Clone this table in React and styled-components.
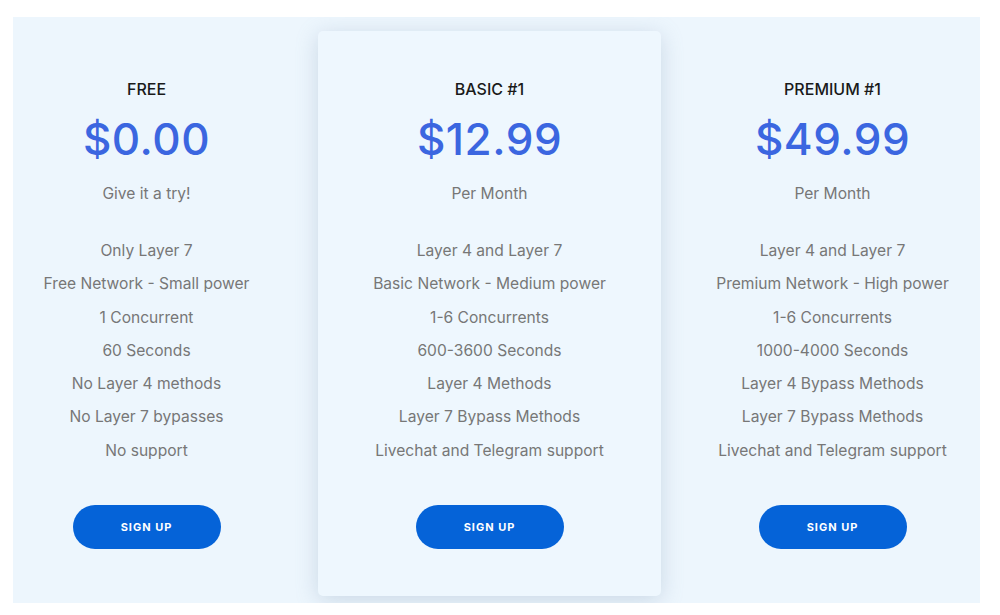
import React from 'react';
import styled, { createGlobalStyle } from 'styled-components';

const GlobalStyle = createGlobalStyle`
  html, body {
    margin: 0;
    padding: 0;
    background: #ffffff;
  }
  body {
    font-family: Inter, "Noto Sans", sans-serif;
  }
`;

const plans = [
  {
    name: 'FREE',
    price: '$0.00',
    period: 'Give it a try!',
    features: [
      'Only Layer 7',
      'Free Network - Small power',
      '1 Concurrent',
      '60 Seconds',
      'No Layer 4 methods',
      'No Layer 7 bypasses',
      'No support',
    ],
  },
  {
    name: 'BASIC #1',
    price: '$12.99',
    period: 'Per Month',
    featured: true,
    features: [
      'Layer 4 and Layer 7',
      'Basic Network - Medium power',
      '1-6 Concurrents',
      '600-3600 Seconds',
      'Layer 4 Methods',
      'Layer 7 Bypass Methods',
      'Livechat and Telegram support',
    ],
  },
  {
    name: 'PREMIUM #1',
    price: '$49.99',
    period: 'Per Month',
    features: [
      'Layer 4 and Layer 7',
      'Premium Network - High power',
      '1-6 Concurrents',
      '1000-4000 Seconds',
      'Layer 4 Bypass Methods',
      'Layer 7 Bypass Methods',
      'Livechat and Telegram support',
    ],
  },
];

const Panel = styled.section`
  margin: 17px 0 0 13px;
  width: 967px;
  padding: 14px 0 7px;
  background: #edf6fd;
  overflow: hidden;
`;

// the three columns are wider than the panel, so the grid hangs off its left edge
const Grid = styled.div`
  display: grid;
  grid-template-columns: repeat(3, 343px);
  margin-left: -38px;
`;

const Plan = styled.div`
  display: flex;
  flex-direction: column;
  align-items: center;
  padding: 46px 0 47px;
  text-align: center;
  border-radius: 5px;
  background: ${p => (p.featured ? '#eef7fe' : 'transparent')};
  box-shadow: ${p => (p.featured ? '0 4px 22px rgba(120, 145, 175, 0.3)' : 'none')};
  position: relative;
  z-index: ${p => (p.featured ? 1 : 0)};
`;

const Name = styled.h3`
  margin: 0;
  font-size: 16px;
  line-height: 24px;
  font-weight: 500;
  color: #1a1a1a;
`;

const Price = styled.div`
  margin-top: 10px;
  font-size: 44px;
  line-height: 56px;
  font-weight: 500;
  color: #3b66e0;
  letter-spacing: 0.5px;
`;

const Period = styled.div`
  margin-top: 15px;
  font-size: 15.6px;
  line-height: 24px;
  color: #777777;
`;

const Features = styled.ul`
  list-style: none;
  margin: 28px 0 0;
  padding: 0;
`;

const Feature = styled.li`
  font-size: 15.6px;
  line-height: 33.3px;
  color: #777777;
`;

const SignUp = styled.button`
  margin-top: 38px;
  width: 148px;
  height: 44px;
  border: none;
  border-radius: 22px;
  background: #0563d8;
  color: #ffffff;
  font-family: inherit;
  font-size: 11px;
  font-weight: 700;
  letter-spacing: 1px;
  cursor: pointer;
`;

export default function App() {
  return (
    <>
      <GlobalStyle />
      <Panel>
        <Grid>
          {plans.map(plan => (
            <Plan key={plan.name} featured={plan.featured}>
              <Name>{plan.name}</Name>
              <Price>{plan.price}</Price>
              <Period>{plan.period}</Period>
              <Features>
                {plan.features.map(f => (
                  <Feature key={f}>{f}</Feature>
                ))}
              </Features>
              <SignUp>SIGN UP</SignUp>
            </Plan>
          ))}
        </Grid>
      </Panel>
    </>
  );
}
